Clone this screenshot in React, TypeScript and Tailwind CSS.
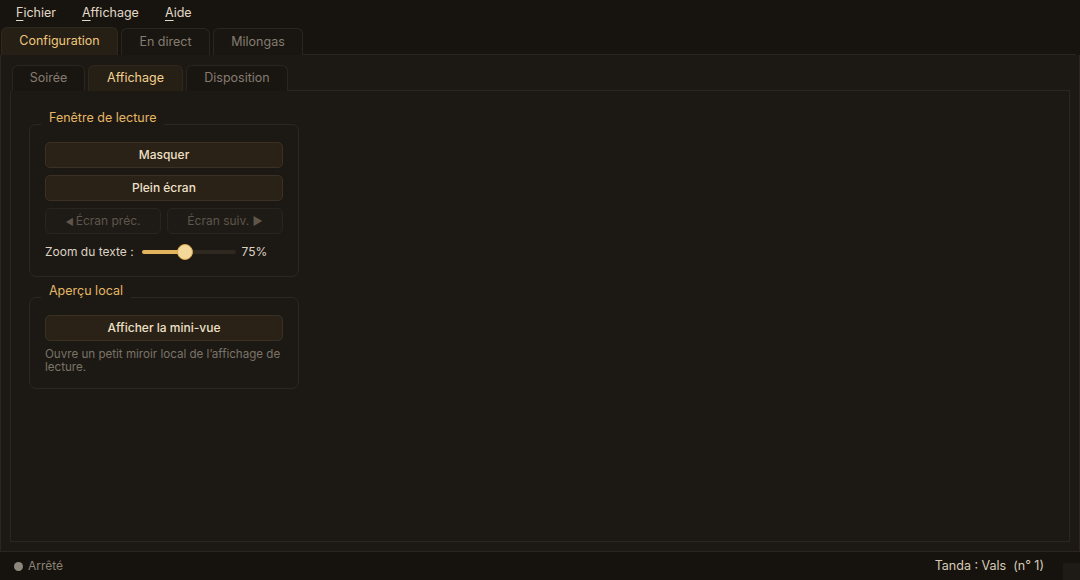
import React, { useState } from "react";

type TabProps = {
  label: string;
  active?: boolean;
  className?: string;
};

// Tab header: the active one is lifted and warmer, others sit dim on the strip
const Tab: React.FC<TabProps> = ({ label, active, className = "" }) => (
  <div
    className={`flex items-center justify-center rounded-t-[6px] border border-b-0 text-[12.5px] ${
      active
        ? "bg-[#261f16] border-[#2f281e] text-[#eec77c]"
        : "bg-[#191612] border-[#2a251f] text-[#857c6f]"
    } ${className}`}
  >
    {label}
  </div>
);

const MenuItem: React.FC<{ first: string; rest: string }> = ({ first, rest }) => (
  <span className="text-[12.5px] text-[#e2d8c8]">
    <span className="underline underline-offset-[3px] decoration-[1px]">{first}</span>
    {rest}
  </span>
);

const GroupBox: React.FC<{ title: string; children: React.ReactNode }> = ({ title, children }) => (
  <fieldset className="w-[270px] rounded-[7px] border border-[#2c271f] px-[15px] pb-[14px]">
    <legend className="ml-[-4px] px-[8px] pb-[12px] text-[12.5px] leading-[14px] text-[#e5b765]">
      {title}
    </legend>
    {children}
  </fieldset>
);

const ActionButton: React.FC<{ children: React.ReactNode; disabled?: boolean; className?: string }> = ({
  children,
  disabled,
  className = "",
}) => (
  <button
    disabled={disabled}
    className={`h-[26px] rounded-[5px] border text-[12px] ${
      disabled
        ? "bg-[#1e1b16] border-[#29241d] text-[#5e564b]"
        : "bg-[#2a2117] border-[#3b3023] text-[#eee0c6] font-medium"
    } ${className}`}
  >
    {children}
  </button>
);

export default function App() {
  const [zoom] = useState(75);

  return (
    <div className="w-[1080px] h-[580px] flex flex-col bg-[#1c1915] font-['Inter','Noto_Sans',sans-serif] overflow-hidden">
      {/* menu bar */}
      <div className="h-[27px] shrink-0 flex items-center gap-[26px] pl-[16px] bg-[#17140f]">
        <MenuItem first="F" rest="ichier" />
        <MenuItem first="A" rest="ffichage" />
        <MenuItem first="A" rest="ide" />
      </div>

      {/* top-level tabs */}
      <div className="h-[28px] shrink-0 flex items-end bg-[#17140f]">
        <Tab label="Configuration" active className="w-[117px] h-[28px] ml-px" />
        <Tab label="En direct" className="w-[89px] h-[27px] ml-[3px]" />
        <Tab label="Milongas" className="w-[90px] h-[27px] ml-[3px]" />
        <div className="flex-1 border-b border-[#2a251f] mr-[4px]" />
      </div>

      {/* configuration pane */}
      <div className="flex-1 flex flex-col border border-t-0 border-[#2a251f] bg-[#1c1915] px-[9px] pt-[10px] pb-[9px]">
        <div className="h-[26px] shrink-0 flex items-end">
          <Tab label="Soirée" className="w-[73px] h-[26px] ml-[2px]" />
          <Tab label="Affichage" active className="w-[95px] h-[26px] ml-[3px] text-[#f2d28e]" />
          <Tab label="Disposition" className="w-[102px] h-[26px] ml-[3px]" />
          <div className="flex-1 border-b border-[#2a251f]" />
        </div>

        <div className="flex-1 border border-t-0 border-[#2a251f] pl-[18px] pt-[20px] flex flex-col gap-[7px]">
          <GroupBox title="Fenêtre de lecture">
            <div className="flex flex-col gap-[7px] pt-[5px]">
              <ActionButton className="w-full">Masquer</ActionButton>
              <ActionButton className="w-full">Plein écran</ActionButton>
              <div className="flex gap-[6px]">
                <ActionButton disabled className="flex-1">
                  <span className="text-[9px] mr-[2px]">◀</span>Écran préc.
                </ActionButton>
                <ActionButton disabled className="flex-1">
                  Écran suiv. <span className="text-[11px]">▶</span>
                </ActionButton>
              </div>
              <div className="flex items-center h-[20px] mt-px text-[12px] text-[#dcd2c2]">
                <span>Zoom du texte :</span>
                <div className="relative ml-[8px] w-[94px] h-[16px] flex items-center">
                  <div className="w-full h-[4px] rounded-full bg-[#2e2820]">
                    <div className="h-full rounded-full bg-[#e3b35e]" style={{ width: `${(zoom / 100) * 46 + 8}px` }} />
                  </div>
                  <div className="absolute left-[35px] top-0 w-[16px] h-[16px] rounded-full bg-[#f3d899] border border-[#d7a64e]" />
                </div>
                <span className="ml-[6px]">{zoom}%</span>
              </div>
            </div>
          </GroupBox>

          <GroupBox title="Aperçu local">
            <div className="flex flex-col pt-[5px]">
              <ActionButton className="w-full">Afficher la mini-vue</ActionButton>
              <p className="mt-[7px] text-[11.6px] leading-[13px] text-[#7b7365]">
                Ouvre un petit miroir local de l’affichage de lecture.
              </p>
            </div>
          </GroupBox>
        </div>
      </div>

      {/* status bar */}
      <div className="h-[28px] shrink-0 flex items-center bg-[#16130f] text-[12px]">
        <span className="ml-[14px] w-[9px] h-[9px] rounded-full bg-[#8e877b]" />
        <span className="ml-[5px] text-[#8a8274]">Arrêté</span>
        <span className="ml-auto mr-[19px] text-[12.5px] text-[#d6cbb7] whitespace-pre">Tanda : Vals  (n° 1)</span>
        <div className="self-end w-[17px] h-[17px] bg-[#1e1b17]" />
      </div>
    </div>
  );
}
